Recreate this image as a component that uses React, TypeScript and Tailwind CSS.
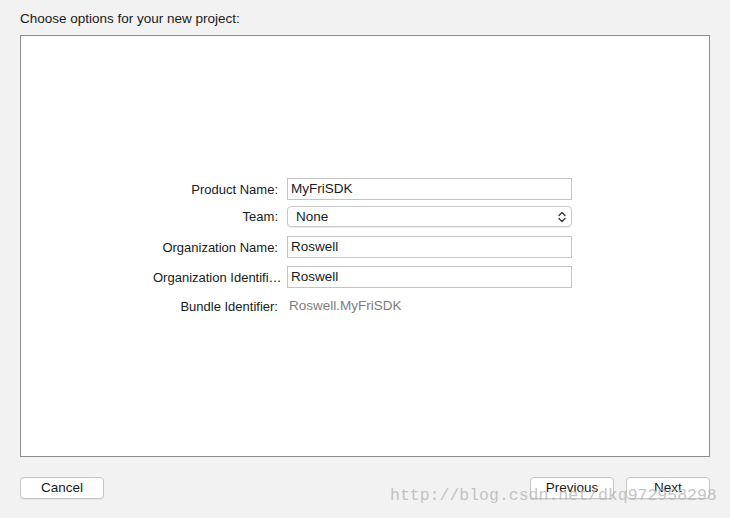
const font = { fontFamily: '"Liberation Sans", Arial, sans-serif' }

function Field({ value }: { value: string }) {
  return (
    <div className="flex h-[22px] w-[285px] items-center border border-[#c4c4c4] bg-white pl-[3px] text-[13.5px] text-[#1a1a1a]">
      {value}
    </div>
  )
}

function Select({ value }: { value: string }) {
  return (
    <div className="flex h-[21px] w-[285px] items-center justify-between rounded-[4px] border border-[#c8c8c8] bg-white pl-[8px] pr-[5px] text-[13.5px] text-[#1a1a1a] shadow-[0_1px_0_rgba(0,0,0,0.06)]">
      <span>{value}</span>
      <svg width="8" height="12" viewBox="0 0 8 12" fill="none">
        <path d="M1 4.5L4 1.5L7 4.5" stroke="#333" strokeWidth="1.3" strokeLinecap="round" strokeLinejoin="round" />
        <path d="M1 7.5L4 10.5L7 7.5" stroke="#333" strokeWidth="1.3" strokeLinecap="round" strokeLinejoin="round" />
      </svg>
    </div>
  )
}

function Button({ label }: { label: string }) {
  return (
    <button className="h-[22px] w-[84px] rounded-[4px] border border-[#c6c6c6] bg-white text-[13.5px] text-[#1a1a1a] shadow-[0_1px_0_rgba(0,0,0,0.05)]">
      {label}
    </button>
  )
}

export default function App() {
  return (
    <div className="relative flex h-[518px] w-[730px] flex-col bg-[#f2f2f2]" style={font}>
      <div className="px-5 pt-[11px] text-[13.5px] leading-4 text-[#1a1a1a]">Choose options for your new project:</div>

      {/* main panel */}
      <div className="mx-5 mt-[8px] flex h-[422px] items-center justify-center border border-[#8c8c8c] bg-white">
        <div className="grid grid-cols-[125px_285px] items-center gap-x-[9px] pr-[5px] pt-[3px] text-[13px] text-[#1a1a1a]">
          <div className="whitespace-nowrap text-right">Product Name:</div>
          <Field value="MyFriSDK" />
          <div className="mt-[6px] text-right">Team:</div>
          <div className="mt-[6px]"><Select value="None" /></div>
          <div className="mt-[9px] whitespace-nowrap text-right">Organization Name:</div>
          <div className="mt-[9px]"><Field value="Roswell" /></div>
          <div className="mt-[8px] whitespace-nowrap text-right">Organization Identifi…</div>
          <div className="mt-[8px]"><Field value="Roswell" /></div>
          <div className="mt-[8px] whitespace-nowrap text-right">Bundle Identifier:</div>
          <div className="mt-[8px] pl-[2px] text-[13.5px] text-[#7d7d7d]">Roswell.MyFriSDK</div>
        </div>
      </div>

      {/* footer buttons */}
      <div className="mt-[20px] flex items-center px-5">
        <Button label="Cancel" />
        <div className="flex-1" />
        <div className="flex gap-3">
          <Button label="Previous" />
          <Button label="Next" />
        </div>
      </div>

      {/* watermark */}
      <div
        className="pointer-events-none absolute left-[390px] top-[486px] text-[16.5px] leading-5 text-[#b8b8b8] opacity-80"
        style={{ fontFamily: '"Liberation Mono", "DejaVu Sans Mono", monospace' }}
      >
        http://blog.csdn.net/dkq972958298
      </div>
    </div>
  )
}
